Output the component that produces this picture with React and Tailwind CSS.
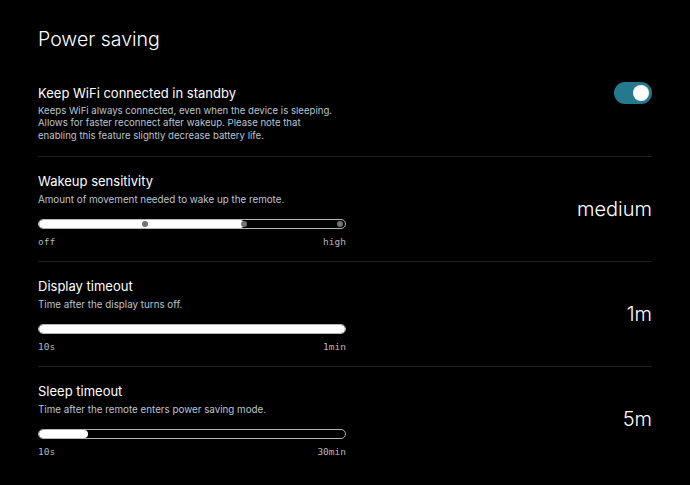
import React, { useState } from 'react';

const sans = { fontFamily: 'Inter, "Noto Sans", sans-serif' };
const mono = { fontFamily: '"DejaVu Sans Mono", "Liberation Mono", monospace' };

const Toggle = ({ on, onChange }) => (
    <button
        onClick={() => onChange(!on)}
        className={`relative w-[38px] h-[22px] rounded-full flex items-center px-[3px] ${on ? 'bg-[#25798d] justify-end' : 'bg-[#3a3a3a] justify-start'}`}
        aria-label="toggle"
    >
        <span className="block w-[16px] h-[16px] rounded-full bg-white" />
    </button>
);

// Stepped slider bar with optional tick dots
const Bar = ({ percent, ticks = [] }) => (
    <div className="relative w-[308px] h-[10px] rounded-full border border-[#b5b5b5] bg-black overflow-hidden">
        <div className="absolute left-0 top-0 bottom-0 bg-white rounded-full" style={{ width: `${percent}%` }} />
        {ticks.map((t) => (
            <span
                key={t}
                className="absolute top-1/2 w-[6px] h-[6px] -mt-[3px] -ml-[3px] rounded-full bg-[#6f7479]"
                style={{ left: `${t}%` }}
            />
        ))}
    </div>
);

const SettingRow = ({ title, description, children, value, last }) => (
    <div className={`flex items-center justify-between pt-[14px] pb-[13px] ${last ? '' : 'border-b border-[#1e1e1e]'}`}>
        <div className="flex flex-col">
            <h3 className="text-[13px] leading-[20px] font-normal text-white">{title}</h3>
            <p className="text-[9.8px] leading-[13px] text-[#bcc5d1] mt-[2px]">{description}</p>
            {children}
        </div>
        {value && <span className="text-[20px] font-light text-white">{value}</span>}
    </div>
);

const SliderBlock = ({ percent, ticks, min, max }) => (
    <div className="mt-[13px] w-[308px]">
        <Bar percent={percent} ticks={ticks} />
        <div className="flex justify-between mt-[7px] text-[9.5px] leading-[12px] text-[#b4b8bd]" style={mono}>
            <span>{min}</span>
            <span>{max}</span>
        </div>
    </div>
);

export default function App() {
    const [wifi, setWifi] = useState(true);

    return (
        <div className="w-[690px] h-[485px] bg-black text-white overflow-hidden" style={sans}>
            <div className="px-[38px] pt-[26px]">
                <h1 className="text-[19.5px] leading-[26px] font-light">Power saving</h1>

                <div className="mt-[20px]">
                    <div className="flex items-start justify-between pt-[11px] pb-[14px] border-b border-[#1e1e1e]">
                        <div className="flex flex-col">
                            <h3 className="text-[13px] leading-[20px] font-normal">Keep WiFi connected in standby</h3>
                            <p className="text-[9.6px] leading-[12.3px] text-[#bcc5d1] mt-[2px] w-[300px]">
                                Keeps WiFi always connected, even when the device is sleeping. Allows for faster reconnect after wakeup. Please note that enabling this feature slightly decrease battery life.
                            </p>
                        </div>
                        <div className="-mt-[1px]">
                            <Toggle on={wifi} onChange={setWifi} />
                        </div>
                    </div>

                    <SettingRow
                        title="Wakeup sensitivity"
                        description="Amount of movement needed to wake up the remote."
                        value="medium"
                    >
                        <SliderBlock percent={67} ticks={[34.5, 67, 98.5]} min="off" max="high" />
                    </SettingRow>

                    <SettingRow
                        title="Display timeout"
                        description="Time after the display turns off."
                        value="1m"
                    >
                        <SliderBlock percent={100} min="10s" max="1min" />
                    </SettingRow>

                    <SettingRow
                        title="Sleep timeout"
                        description="Time after the remote enters power saving mode."
                        value="5m"
                        last
                    >
                        <SliderBlock percent={16} min="10s" max="30min" />
                    </SettingRow>
                </div>
            </div>
        </div>
    );
}
